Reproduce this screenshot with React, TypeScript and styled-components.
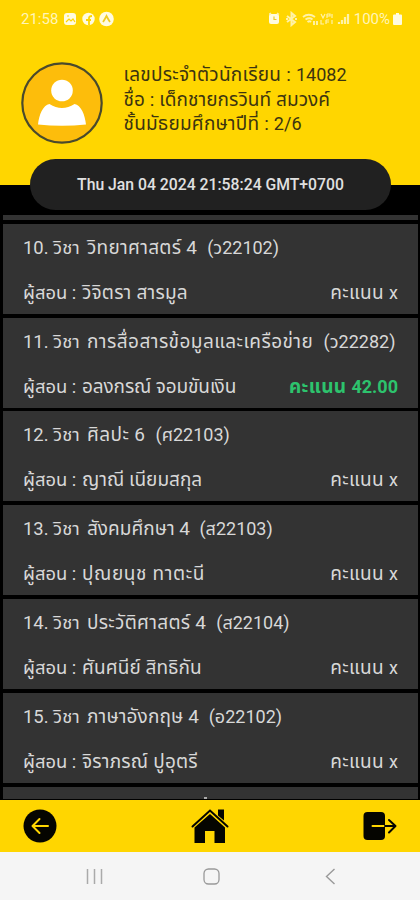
import React from "react";
import styled, { createGlobalStyle } from "styled-components";

const Global = createGlobalStyle`
  * { box-sizing: border-box; }
  body { margin: 0; background: #000; }
`;

const Screen = styled.div`
  width: 420px;
  height: 900px;
  display: flex;
  flex-direction: column;
  overflow: hidden;
  background: #000;
  font-family: Roboto, "Noto Sans Thai", "Noto Sans", sans-serif;
`;

const Header = styled.header`
  height: 185px;
  flex: none;
  background: #ffd600;
`;

const StatusBar = styled.div`
  height: 38px;
  padding: 0 18px 0 21px;
  display: flex;
  align-items: center;
  justify-content: space-between;
  color: #fff5b8;
`;

const StatusGroup = styled.div<{ $gap: number }>`
  display: flex;
  align-items: center;
  gap: ${(p) => p.$gap}px;
`;

const StatusText = styled.span`
  font-size: 15px;
  line-height: 18px;
`;

const Profile = styled.div`
  display: flex;
  padding: 24px 0 0 21px;
`;

const Avatar = styled.svg`
  width: 82px;
  height: 82px;
  flex: none;
`;

const Info = styled.div`
  margin: 1px 0 0 20.5px;
`;

const InfoLine = styled.div`
  height: 24.5px;
  line-height: 24.5px;
  font-size: 18px;
  color: #3c3410;
  white-space: pre;
`;

const ClockPill = styled.div`
  position: relative;
  flex: none;
  width: 361px;
  height: 51px;
  margin: -26px 0 0 30px;
  border-radius: 26px;
  background: #212121;
  display: flex;
  align-items: center;
  justify-content: center;
  color: #e0e0e0;
  font-size: 15.75px;
  font-weight: 500;
`;

const List = styled.main`
  flex: none;
  height: 585px;
  margin-top: 5px;
  padding: 0 2px 0 2.5px;
  display: flex;
  flex-direction: column;
  gap: 3.8px;
  overflow: hidden;
`;

const Strip = styled.div<{ $height: number }>`
  flex: none;
  height: ${(p) => p.$height}px;
  background: #333;
`;

const LastStrip = styled(Strip)`
  display: flex;
  align-items: flex-end;
  padding-left: 201px;
`;

const ClippedMark = styled.i`
  width: 3px;
  height: 2px;
  background: #aaa;
`;

const Card = styled.article`
  flex: none;
  height: 90px;
  padding: 9px 20px 0 20.5px;
  background: #333;
  color: #d8d8d8;
`;

const Line = styled.div`
  height: 45px;
  display: flex;
  line-height: 30px;
  font-size: 18px;
  white-space: pre;
`;

const Prefix = styled.span<{ $width: number }>`
  flex: none;
  width: ${(p) => p.$width}px;
  font-size: 18.4px;
`;

const Thai = styled.span<{ $spacing: number }>`
  font-size: 19px;
  letter-spacing: ${(p) => p.$spacing}px;
`;

const Score = styled.span<{ $graded: boolean }>`
  margin-left: auto;
  color: ${(p) => (p.$graded ? "#2dc36d" : "inherit")};
  font-weight: ${(p) => (p.$graded ? 700 : 400)};
`;

const TabBar = styled.nav`
  flex: none;
  height: 52px;
  padding: 0 23px 0 23px;
  background: #ffd600;
  display: flex;
  align-items: center;
  justify-content: space-between;
`;

const SystemBar = styled.footer`
  flex: none;
  height: 48px;
  padding: 1px 84px 0 86px;
  background: #f5f5f5;
  display: grid;
  grid-template-columns: 117px 1fr auto;
  align-items: center;
`;

interface Course {
  no: number;
  subject: string;
  subjectSpacing: number;
  code: string;
  teacher: string;
  teacherSpacing: number;
  score?: string;
}

const courses: Course[] = [
  { no: 10, subject: "วิทยาศาสตร์ 4  ", subjectSpacing: 0.27, code: "ว22102", teacher: "วิจิตรา สารมูล", teacherSpacing: 0.2 },
  { no: 11, subject: "การสื่อสารข้อมูลและเครือข่าย  ", subjectSpacing: 0.45, code: "ว22282", teacher: "อลงกรณ์ จอมขันเงิน", teacherSpacing: -0.12, score: "42.00" },
  { no: 12, subject: "ศิลปะ 6  ", subjectSpacing: 0.37, code: "ศ22103", teacher: "ญาณี เนียมสกุล", teacherSpacing: 0 },
  { no: 13, subject: "สังคมศึกษา 4  ", subjectSpacing: 0, code: "ส22103", teacher: "ปุณยนุช ทาตะนี", teacherSpacing: 0.6 },
  { no: 14, subject: "ประวัติศาสตร์ 4  ", subjectSpacing: 0.28, code: "ส22104", teacher: "ศันศนีย์ สิทธิกัน", teacherSpacing: 0.06 },
  { no: 15, subject: "ภาษาอังกฤษ 4  ", subjectSpacing: 0.13, code: "อ22102", teacher: "จิราภรณ์ ปูอุตรี", teacherSpacing: 0.2 },
];

const Notifications = () => (
  <svg width="52" height="16" viewBox="0 0 52 16" fill="none">
    <rect x="1" y="2" width="12" height="12" rx="3" fill="#fffbe0" />
    <path d="M3 11l3-3 2 2 2-2 2 3M4 5h2" stroke="#ffd600" strokeWidth="1.2" />
    <circle cx="25.5" cy="8" r="6.2" fill="#fffbe0" />
    <path d="M26 14V7q0-2 3-2M23 9h5" stroke="#ffd600" strokeWidth="1.8" />
    <circle cx="43.5" cy="8" r="7.3" fill="#fffbe0" />
    <path d="M40 11q2-3 3.500-6 1.500 3 3.500 6" stroke="#f0cb22" strokeWidth="1.7" />
  </svg>
);

const Indicators = () => (
  <svg width="82" height="16" viewBox="0 0 82 16" fill="none" stroke="#fff2a8">
    <rect x="0" y="3" width="10" height="10" rx="2" fill="#fffbe0" stroke="none" />
    <path d="M0 3.500l2-1.500M10 3.500L8 2" strokeWidth="1.500" />
    <path d="M5 5.500V8.500H7.500" stroke="#ecc92c" strokeWidth="1.2" />
    <path d="M18 5l8 6-3.500 3V2L26 5l-8 6M17 8h2M26 8h2" strokeWidth="2" />
    <path d="M34 6q5.500-4.500 12 0M36.500 8.500q4-2.500 7 0M38.500 11q2-1.500 3.500 0M45 10v4M48 10v4" strokeWidth="1.900" />
    <path d="M52 3l2 4 2-4M58 3v4M58 3h3v2h-3M63 3v4M52 9v4h3M57 9v4M57 9h3M57 11h3M63 9v4" strokeWidth="1.200" />
    <path d="M70 13v-2M73 13V9M76 13V6M79 13V3" strokeWidth="2.200" />
  </svg>
);

const BatteryIcon = () => (
  <svg width="9" height="14" viewBox="0 0 9 14" fill="#fffbe0">
    <path d="M3 1h3v1.500h2q1 0 1 1V12q0 1-1 1H1q-1 0-1-1V3.500q0-1 1-1h2z" />
  </svg>
);

const BackIcon = () => (
  <svg width="34" height="34" viewBox="0 0 34 34" fill="none">
    <circle cx="17" cy="17" r="16.500" fill="#050500" />
    <path d="M25 17H10M16.500 10L9.500 17l7 7" stroke="#ffd600" strokeWidth="2" strokeLinecap="round" strokeLinejoin="round" />
  </svg>
);

const HomeIcon = () => (
  <svg width="38" height="36" viewBox="0 0 38 36" fill="#050500">
    <path d="M3.500 19.500L19 6l15 13.500V35H23.500V23H14v12H3.500z" />
    <path d="M1.500 18.500L19 2.500l17.500 16" fill="none" stroke="#050500" strokeWidth="2" strokeLinecap="round" />
    <path d="M27 1.500h6v11l-6-5z" />
  </svg>
);

const LogoutIcon = () => (
  <svg width="34" height="30" viewBox="0 0 34 30" fill="none">
    <rect x="0.5" y="1" width="21.500" height="28" rx="4" fill="#050500" />
    <path d="M9.500 15H22" stroke="#ffd600" strokeWidth="2" strokeLinecap="round" />
    <path d="M22 15h10M26 9l6.500 6-6.500 6.500" stroke="#050500" strokeWidth="2" strokeLinecap="round" strokeLinejoin="round" />
  </svg>
);

export default function App() {
  return (
    <>
      <Global />
      <Screen>
        <Header>
          <StatusBar>
            <StatusGroup $gap={5}>
              <StatusText>21:58</StatusText>
              <Notifications />
            </StatusGroup>
            <StatusGroup $gap={3}>
              <Indicators />
              <StatusText>100%</StatusText>
              <BatteryIcon />
            </StatusGroup>
          </StatusBar>
          <Profile>
            <Avatar viewBox="0 0 82 82">
              <circle cx="41" cy="41" r="39.700" fill="#fdbd0b" stroke="#4a4a2c" strokeWidth="2.200" />
              <circle cx="41" cy="28.500" r="10.800" fill="#fff" />
              <path d="M17 62.500C18 53 22 43 28.500 42Q41 50 53.500 42C60 43 64 53 65 62.500Q41 65 17 62.500z" fill="#fff" />
            </Avatar>
            <Info>
              <InfoLine><Thai $spacing={0.26}>เลขประจำตัวนักเรียน : </Thai>14082</InfoLine>
              <InfoLine><Thai $spacing={0.07}>ชื่อ : เด็กชายกรวินท์ สมวงค์</Thai></InfoLine>
              <InfoLine><Thai $spacing={0.2}>ชั้นมัธยมศึกษาปีที่ : </Thai>2/6</InfoLine>
            </Info>
          </Profile>
        </Header>
        <ClockPill>Thu Jan 04 2024 21:58:24 GMT+0700</ClockPill>
        <List>
          <Strip $height={5} />
          {courses.map((c) => (
            <Card key={c.no}>
              <Line>
                <Prefix $width={64}>{c.no}. วิชา </Prefix>
                <Thai $spacing={c.subjectSpacing}>{c.subject}</Thai>
                <span>({c.code})</span>
              </Line>
              <Line>
                <Prefix $width={59}>ผู้สอน : </Prefix>
                <Thai $spacing={c.teacherSpacing}>{c.teacher}</Thai>
                <Score $graded={!!c.score}>
                  <Thai $spacing={0.35}>คะแนน </Thai>
                  {c.score ?? "x"}
                </Score>
              </Line>
            </Card>
          ))}
          <LastStrip $height={12}>
            <ClippedMark />
          </LastStrip>
        </List>
        <TabBar>
          <BackIcon />
          <HomeIcon />
          <LogoutIcon />
        </TabBar>
        <SystemBar>
          <svg width="17" height="17" viewBox="0 0 17 17" stroke="#aaa" strokeWidth="1.500">
            <path d="M1.500 1v15M8.500 1v15M15.500 1v15" />
          </svg>
          <svg width="17" height="17" viewBox="0 0 17 17" fill="none" stroke="#999" strokeWidth="1.300">
            <rect x="1" y="1" width="15" height="15" rx="4.500" />
          </svg>
          <svg width="11" height="17" viewBox="0 0 11 17" fill="none" stroke="#999" strokeWidth="1.400">
            <path d="M9.500 1L1.500 8.500l8 7.500" />
          </svg>
        </SystemBar>
      </Screen>
    </>
  );
}
